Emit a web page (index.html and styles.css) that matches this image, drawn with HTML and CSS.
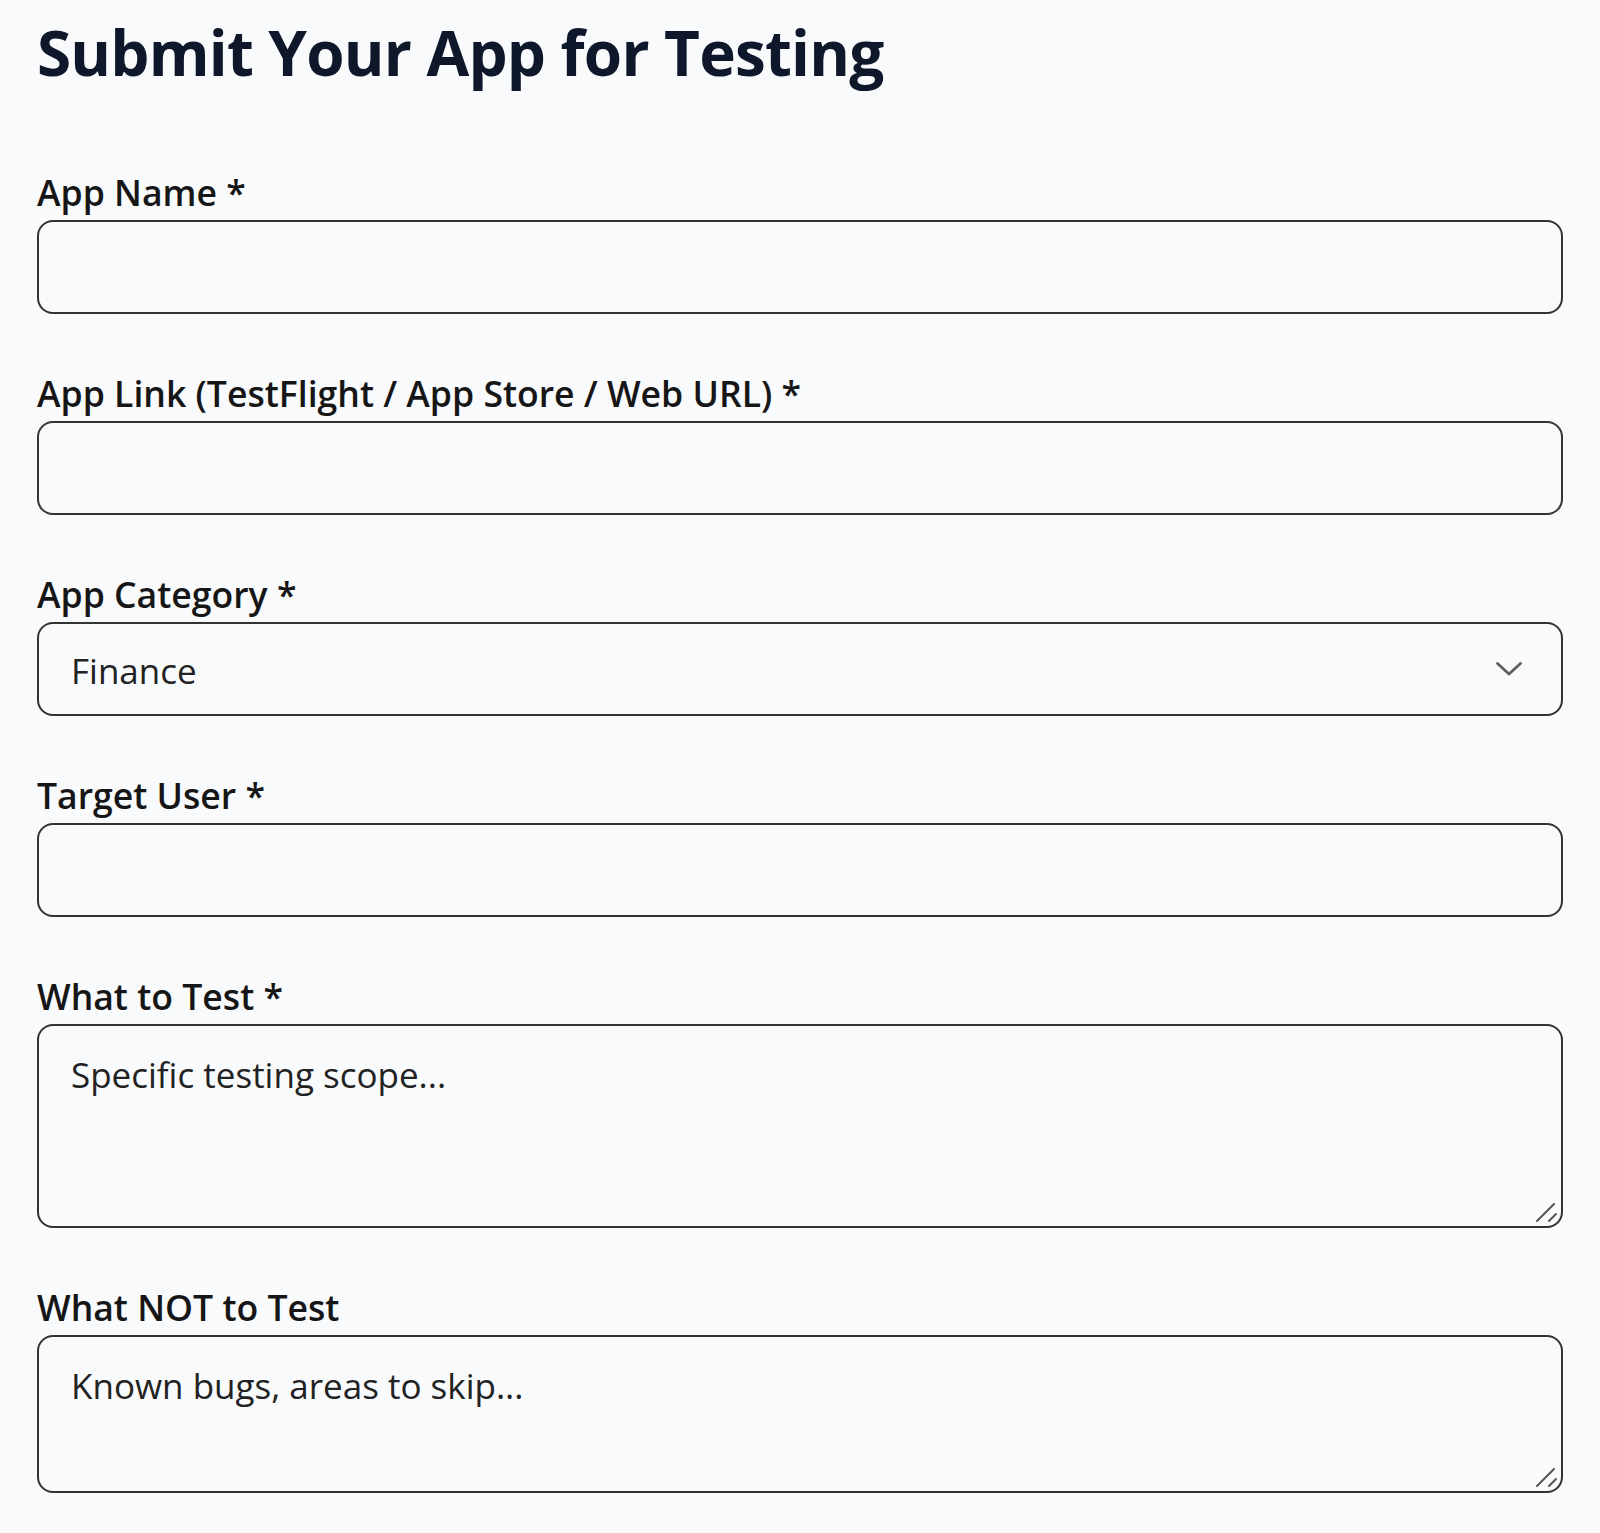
FILE: index.html
```html
<!DOCTYPE html>
<html lang="en">
<head>
<meta charset="utf-8">
<title>Submit Your App for Testing</title>
<link rel="stylesheet" href="styles.css">
</head>
<body>
<main class="page">
  <h1 class="title">Submit Your App for Testing</h1>
  <form class="form">
    <div class="field">
      <label class="label" for="name">App Name *</label>
      <input class="control" id="name" type="text">
    </div>
    <div class="field">
      <label class="label" for="link">App Link (TestFlight / App Store / Web URL) *</label>
      <input class="control" id="link" type="text">
    </div>
    <div class="field">
      <label class="label" for="cat">App Category *</label>
      <div class="control-wrap">
        <select class="control select" id="cat">
          <option>Finance</option>
          <option>Health</option>
          <option>Productivity</option>
        </select>
        <svg class="chevron" viewBox="0 0 26 14" width="26" height="14" aria-hidden="true">
          <path d="M1.5 1.5 L13 12 L24.5 1.5" fill="none" stroke="#5f5f5f" stroke-width="2.8" stroke-linecap="round" stroke-linejoin="round"/>
        </svg>
      </div>
    </div>
    <div class="field">
      <label class="label" for="user">Target User *</label>
      <input class="control" id="user" type="text">
    </div>
    <div class="field">
      <label class="label" for="what">What to Test *</label>
      <div class="control-wrap">
        <textarea class="control area area-lg" id="what" placeholder="Specific testing scope..."></textarea>
        <svg class="grip" viewBox="0 0 26 26" width="26" height="26" aria-hidden="true">
          <path d="M20 4 L3 21 M22 14 L15 21" fill="none" stroke="#555" stroke-width="2" stroke-linecap="round"/>
        </svg>
      </div>
    </div>
    <div class="field">
      <label class="label" for="not">What NOT to Test</label>
      <div class="control-wrap">
        <textarea class="control area area-sm" id="not" placeholder="Known bugs, areas to skip..."></textarea>
        <svg class="grip" viewBox="0 0 26 26" width="26" height="26" aria-hidden="true">
          <path d="M20 4 L3 21 M22 14 L15 21" fill="none" stroke="#555" stroke-width="2" stroke-linecap="round"/>
        </svg>
      </div>
    </div>
  </form>
</main>
</body>
</html>
```
FILE: styles.css
```css
html, body {
  margin: 0;
  padding: 0;
  background: #f8fafc;
}

body {
  font-family: "Open Sans", "Noto Sans", "Liberation Sans", sans-serif;
  color: #141414;
}

.page {
  padding: 12px 37px 0 37px;
}

.title {
  margin: 0;
  font-size: 62px;
  line-height: 80px;
  font-weight: 700;
  color: #0f172a;
  letter-spacing: -0.8px;
}

.form {
  display: flex;
  flex-direction: column;
  gap: 55px;
  margin-top: 76px;
}

.field {
  display: flex;
  flex-direction: column;
  gap: 4px;
}

.label {
  font-size: 35.6px;
  line-height: 48px;
  font-weight: 600;
  color: #161616;
}

.control {
  box-sizing: border-box;
  width: 100%;
  height: 94px;
  margin: 0;
  border: 2px solid #333333;
  border-radius: 16px;
  background: #f8fafc;
  font-family: inherit;
  font-size: 35px;
  color: #222222;
  padding: 0 32px;
  outline: none;
}

.control-wrap {
  position: relative;
}

.select {
  appearance: none;
  -webkit-appearance: none;
  line-height: 48px;
  padding-top: 4px;
}

.chevron {
  position: absolute;
  right: 41px;
  top: 40px;
  pointer-events: none;
}

.area {
  display: block;
  padding: 25px 32px;
  line-height: 48px;
  resize: none;
}

.area::placeholder {
  color: #222222;
  opacity: 1;
}

.area-lg {
  height: 204px;
}

.area-sm {
  height: 158px;
}

.grip {
  position: absolute;
  right: 3px;
  bottom: 2px;
  pointer-events: none;
}
```
